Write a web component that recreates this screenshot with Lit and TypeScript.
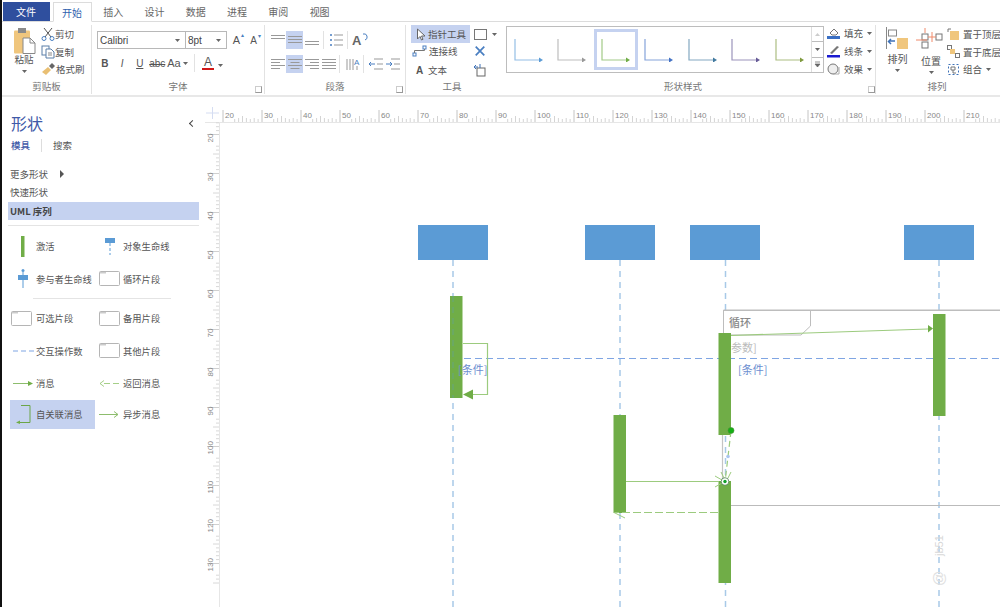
import { LitElement, html, css, svg } from "lit";
import { customElement } from "lit/decorators.js";

const caret = html`<svg class="caret" width="7" height="5" viewBox="0 0 7 5"><path d="M1 1h5L3.5 4z" fill="#666"/></svg>`;

const I = {
  paste: html`<svg width="23" height="26" viewBox="0 0 23 26"><rect x="1" y="2.500" width="16" height="23" rx="1" fill="#f0c67d"/><rect x="5" y="0" width="8" height="5" fill="#8a8a8a"/><path d="M10 10h7l5 5v10.500H10z" fill="#fff" stroke="#888"/><path d="M17 10v5h5" fill="none" stroke="#888"/></svg>`,
  cut: html`<svg width="14" height="14" viewBox="0 0 14 14" fill="none" stroke="#555"><path d="M3 1l7 9M11 1L4 10"/><circle cx="3" cy="11.500" r="2" stroke="#4a7fc1"/><circle cx="11" cy="11.500" r="2" stroke="#4a7fc1"/></svg>`,
  copy: html`<svg width="14" height="14" viewBox="0 0 14 14" fill="#fff" stroke="#5a7fa8"><rect x="1" y="1" width="7" height="9"/><path d="M5 4h5l3 3v6H5z"/><path d="M7 8h4M7 10h4" stroke="#888"/></svg>`,
  brush: html`<svg width="15" height="14" viewBox="0 0 15 14"><path d="M1 10l6-5 3 3-5 5z" fill="#e9bf73"/><path d="M8 4l3-3 3 3-3 3z" fill="#666"/></svg>`,
  cross: html`<svg width="12" height="12" viewBox="0 0 14 14" stroke="#4a7fc1" stroke-width="2"><path d="M2 2l10 10M12 2L2 12"/></svg>`,
};

const lines = (ws: number[], y0: number, gap: number, align: "l" | "c" | "r") => svg`${ws.map((w, i) => {
  const x = align === "l" ? 1 : align === "r" ? 15 - w : (16 - w) / 2;
  return svg`<path d="M${x} ${y0 + i * gap + 0.5}h${w}" stroke="#999"/>`;
})}`;
const para = (c: unknown, on = false) => html`<span class="pbtn ${on ? "on" : ""}"><svg width="16" height="16" viewBox="0 0 16 16" fill="none">${c}</svg></span>`;

const arrowItem = (c: string, sel = false) => html`<div class="gal ${sel ? "sel" : ""}"><svg width="30" height="24" viewBox="0 0 30 24" fill="none"><path d="M1 1v21h25" stroke="${c}" stroke-opacity=".65" stroke-width="1.2"/><path d="M25 19.5l4 2.500-4 2.500z" fill="${c}"/></svg></div>`;

const frameIcon = html`<svg class="fi" width="21" height="15" viewBox="0 0 21 15" fill="#fff"><rect x=".5" y=".5" width="20" height="14" rx="1" stroke="#b5b5b5"/><path d="M1 1h6v1.500H1z" fill="#ccc"/></svg>`;

@customElement("app-root")
export class AppRoot extends LitElement {
  static styles = css`
    :host { display: block; width: 1000px; height: 607px; overflow: hidden; background: #fff; font-family: "Noto Sans CJK SC", "Liberation Sans", sans-serif; font-size: 10px; color: #555; border-left: 2px solid #111; box-sizing: border-box; }
    .tabs { display: flex; height: 22px; align-items: flex-end; border-bottom: 1px solid #dcdcdc; box-sizing: border-box; font-size: 10px; }
    .file { width: 47px; height: 19px; margin-left: .5px; background: #2f4f9e; color: #fff; display: flex; align-items: center; justify-content: center; }
    .tab { width: 41.300px; height: 19px; display: flex; align-items: center; justify-content: center; color: #666; }
    .tab.act { width: 39px; margin: 0 1px 0 3px; height: 20px; margin-bottom: -1px; border: 1px solid #dcdcdc; border-bottom: 1px solid #fff; box-sizing: border-box; background: #fff; color: #2f5fae; }
    .ribbon { display: flex; height: 73px; border-bottom: 2px solid #e8e8e8; box-sizing: content-box; }
    .grp { display: flex; flex-direction: column; border-right: 1px solid #e2e2e2; margin: 3px 0 1px; box-sizing: border-box; position: relative; }
    .grp.last { border-right: 0; }
    .body { height: 54px; display: flex; }
    .lbl { height: 15px; line-height: 15px; text-align: center; color: #777; font-size: 9.500px; }
    .launch { position: absolute; right: 2px; bottom: 1px; width: 5px; height: 5px; border: 1px solid #999; border-top-color: #ccc; border-left-color: #ccc; }
    .clip { width: 90px; } .font { width: 173px; } .par { width: 141px; } .tools { width: 92px; border-right: 0; } .styles { width: 378px; } .arr { width: 122px; }
    .paste { width: 34px; margin-left: 5px; display: flex; flex-direction: column; align-items: center; padding-top: 3px; font-size: 9.500px; line-height: 10px; color: #555; }
    .paste svg.caret { margin-top: 5px; }
    .col { display: flex; flex-direction: column; justify-content: space-between; padding: 1px 0 2px; }
    .it { display: flex; align-items: center; gap: 3px; height: 16px; font-size: 9.500px; white-space: nowrap; color: #555; }
    .clip .it { gap: 0; }
    .font .body { flex-direction: column; padding: 6px 0 0 5px; gap: 5px; }
    .row { display: flex; align-items: center; }
    .sel1, .sel2 { height: 18px; border: 1px solid #b8b8b8; box-sizing: border-box; display: flex; align-items: center; justify-content: space-between; padding: 0 4px 0 2px; font-family: "Liberation Sans", sans-serif; font-size: 10px; color: #444; }
    .sel1 { width: 89px; } .sel2 { width: 42px; margin-left: -1px; }
    .ga { font-family: "Liberation Sans", sans-serif; font-size: 11px; color: #555; width: 17px; text-align: center; position: relative; }
    .ga sup { font-size: 6px; color: #4a7fc1; position: absolute; top: -2px; right: 1px; line-height: 1; }
    .fb { font-family: "Liberation Sans", sans-serif; color: #555; width: 17.500px; text-align: center; font-size: 10px; }
    .vsep { width: 1px; height: 18px; background: #e2e2e2; }
    .fa { display: flex; flex-direction: column; align-items: center; width: 14px; font: 12px/12px "Liberation Sans", sans-serif; color: #555; }
    .fa i { display: block; width: 12px; height: 2.500px; background: #d01818; }
    .par .body { flex-direction: column; padding: 6px 0 0 4px; gap: 6px; }
    .pbtn { width: 17px; height: 18px; display: flex; align-items: center; justify-content: center; flex: none; }
    .pbtn.on { background: #c5d2f0; }
    .tools .body { flex-direction: column; padding-left: 5px; }
    .tr { display: flex; align-items: center; height: 18px; }
    .tl { width: 59px; height: 18px; display: flex; align-items: center; gap: 2px; padding-left: 5px; box-sizing: border-box; color: #555; font-size: 9.500px; white-space: nowrap; }
    .tl.on { background: #c5d2f0; }
    .ti { margin-left: 4px; display: flex; align-items: center; gap: 4px; }
    .gallery { width: 318px; height: 47px; border: 1px solid #bdbdbd; box-sizing: border-box; display: flex; margin: 1px 0 0 8px; position: relative; padding: 2px 0; }
    .gal { width: 43.500px; display: flex; align-items: center; justify-content: center; box-sizing: border-box; flex: none; }
    .gal.sel { border: 3px solid #c5d2f0; }
    .scr { position: absolute; right: 0; top: 0; bottom: 0; width: 11px; border-left: 1px solid #ddd; display: flex; flex-direction: column; }
    .scr span { flex: 1; display: flex; align-items: center; justify-content: center; border-bottom: 1px solid #bdbdbd; }
    .scr span:last-child { border-bottom: 0; }
    .sc { margin-left: 3px; }
    .arr .body { padding-left: 10px; }
    .big { display: flex; flex-direction: column; align-items: center; width: 32px; font-size: 10px; color: #555; gap: 2px; padding-top: 2px; }
    .side { width: 203px; flex: none; display: flex; flex-direction: column; padding: 15px 6px 0 6px; box-sizing: border-box; }
    .main { display: flex; height: 510px; }
    .head { display: flex; justify-content: space-between; align-items: center; padding: 0 2px 0 3px; font-size: 16px; color: #3f5aa8; height: 22px; }
    .chev { width: 4px; height: 4px; border-left: 1.500px solid #444; border-bottom: 1.500px solid #444; transform: rotate(45deg); margin-right: 2px; }
    .sub { display: flex; align-items: center; height: 14px; margin: 4px 0 0 3px; font-size: 9.500px; }
    .sub b { color: #3f5aa8; font-weight: 500; }
    .sub i { width: 1px; height: 13px; background: #ddd; margin: 0 11px; }
    .m { height: 18px; line-height: 18px; font-size: 9.500px; padding-left: 2px; color: #555; display: flex; align-items: center; gap: 12px; }
    .tri { width: 0; height: 0; border-left: 4px solid #555; border-top: 4px solid transparent; border-bottom: 4px solid transparent; }
    .m.hl { background: #c5d2f0; font-weight: 700; color: #444; margin-top: 1px; }
    .m.first { margin-top: 13px; }
    hr { border: 0; border-top: 1px solid #e4e4e4; margin: 5px 0 0; }
    .grid { display: grid; grid-template-columns: 88px 1fr; row-gap: 0; font-size: 9.300px; margin-top: 4px; margin-left: 2px; }
    .s { display: flex; align-items: center; height: 32.500px; white-space: nowrap; color: #555; }
    .s .ic { width: 26px; display: flex; justify-content: center; flex: none; }
    .s.on { background: #c5d2f0; height: 29px; margin-right: 2px; width: 85px; }
    .grid hr { grid-column: 1 / 3; margin: 3px 28px 3px 23px; }
    .s.r .ic { width: 25px; }
    .s.fr .ic { width: 26px; justify-content: flex-start; padding-left: 1px; box-sizing: border-box; }
    .s.r.fr .ic { width: 25px; }
    .canvas { flex: 1; display: block; }
    .canvas svg { display: block; }
    text { font-family: "Noto Sans CJK SC", "Liberation Sans", sans-serif; }
  `;

  private ruler() {
    const h: unknown[] = [];
    for (let v = 20; v <= 219; v++) {
      const x = 223 + (v - 20) * 3.9;
      if (x > 1000) break;
      const u = v % 10;
      if (u === 0) {
        h.push(svg`<path d="M${x} 110v12" stroke="#c4c4c4"/><text x="${x + 2}" y="118" font-size="8" fill="#888" style="font-family:'Liberation Sans',sans-serif">${v}</text>`);
      } else if (u > 2) {
        h.push(svg`<path d="M${x} ${u === 5 ? 116 : u % 2 ? 119 : 118}V122" stroke="#d4d4d4"/>`);
      }
    }
    const w: unknown[] = [];
    for (let v = 15; v <= 135; v++) {
      const y = 137.500 + (v - 20) * 3.9;
      if (y < 122) continue;
      const u = v % 10;
      if (u === 0) {
        w.push(svg`<path d="M207 ${y - 3}H219" stroke="#d0d0d0"/><text transform="translate(213,${y + 5}) rotate(-90)" font-size="8" fill="#888" style="font-family:'Liberation Sans',sans-serif">${v}</text>`);
      } else if (u > 2) {
        w.push(svg`<path d="M${u === 5 ? 213 : 216} ${y - 3}H219" stroke="#d8d8d8"/>`);
      }
    }
    return svg`
      <path d="M206 113h13M212.500 107v12" stroke="#d5ddf2"/>
      <path d="M205 122.500H1000M219.500 122V607" stroke="#e6e6e6"/>
      ${h}${w}`;
  }

  private diagram() {
    const boxes = [418, 585, 690, 904];
    const lifes = [453, 620, 725.500, 939];
    const acts: [number, number, number][] = [[450, 296, 398], [613.500, 415, 513], [718.500, 333, 435], [718.500, 481, 583], [933, 314, 416]];
    const green = "#9ccb7e";
    return svg`
      ${boxes.map((x) => svg`<rect x="${x}" y="225" width="70" height="35" fill="#5b9bd5"/>`)}
      ${lifes.map((x) => svg`<path d="M${x} 260V607" stroke="#a8c9e8" stroke-width="1.500" stroke-dasharray="6 5"/>`)}
      <path d="M1001 310H723.500V335H801L810.500 326V310" fill="#fff" stroke="#bdbdbd"/>
      <path d="M1001 310.500H723.500" stroke="#bdbdbd"/>
      <text x="729" y="327" font-size="11" fill="#888" font-weight="500">循环</text>
      <text x="731" y="352" font-size="11" fill="#bbb">参数]</text>
      <path d="M453 358.500H1000" stroke="#7fa5e3" stroke-width="1.200" stroke-dasharray="7 4"/>
      ${acts.map(([x, a, b]) => svg`<rect x="${x}" y="${a}" width="12.500" height="${b - a}" fill="#70ad47"/>`)}
      <path d="M453 296V398" stroke="#5f9fb0" stroke-width="1" stroke-dasharray="6 5" opacity=".55"/>
      <path d="M463 343.500H487.500V394.500H473" fill="none" stroke="${green}" stroke-width="1.200"/>
      <path d="M463 394.500L473 389.500V399.500z" fill="#70ad47"/>
      <text x="458" y="374" font-size="11" fill="#6d8fd0">[条件]</text>
      <text x="738" y="374" font-size="11" fill="#6d8fd0">[条件]</text>
      <path d="M731 335.500L928 329" stroke="${green}" stroke-width="1.200"/>
      <path d="M933 328.500L928 325V332.500z" fill="#70ad47"/>
      <path d="M731 505.500H1000" stroke="#bbb" stroke-width="1.200"/>
      <path d="M626 481.500H719" stroke="${green}" stroke-width="1.200"/>
      <path d="M718 512.500H615" stroke="${green}" stroke-width="1.200" stroke-dasharray="8 3"/>
      <path d="M614 512.500L625 518" stroke="${green}"/>
      <path d="M722.500 435V480" stroke="#c4c4c4" stroke-width="1.200"/>
      <path d="M731 431L725.500 478" stroke="${green}" stroke-width="1.200" stroke-dasharray="6 4"/>
      <path d="M715 476L722 480M715 487L722 483M721 472L724 478M731 472L728 478" stroke="${green}"/>
      <circle cx="731" cy="430.500" r="3" fill="#14b014" stroke="#4b8f3a" stroke-width=".6"/>
      <circle cx="728" cy="456.500" r="1.800" fill="#a9c4ee"/>
      <circle cx="725" cy="481.500" r="3.800" fill="#fff" stroke="#4b7f50" stroke-width=".8"/>
      <circle cx="725" cy="481.500" r="1.700" fill="#14a02c"/>
      <text transform="translate(943,556) rotate(-90)" font-size="11" fill="#d8d8d8" style="font-family:'Liberation Sans',sans-serif">jb51</text>
      <text transform="translate(944,586) rotate(-90)" font-size="15" fill="#e0e0e0" style="font-family:'Liberation Sans',sans-serif">@</text>
    `;
  }

  render() {
    const blue = "#5b9bd5", g = "#70ad47";
    return html`
      <div class="tabs">
        <div class="file">文件</div><div class="tab act">开始</div>
        ${["插入", "设计", "数据", "进程", "审阅", "视图"].map((t) => html`<div class="tab">${t}</div>`)}
      </div>
      <div class="ribbon">
        <div class="grp clip">
          <div class="body">
            <div class="paste">${I.paste}<span>粘贴</span>${caret}</div>
            <div class="col">
              <div class="it">${I.cut}剪切</div><div class="it">${I.copy}复制</div><div class="it">${I.brush}格式刷</div>
            </div>
          </div>
          <div class="lbl">剪贴板</div>
        </div>
        <div class="grp font">
          <div class="body">
            <div class="row">
              <div class="sel1">Calibri ${caret}</div><div class="sel2">8pt ${caret}</div>
              <span class="ga" style="margin-left:1px">A<sup>▴</sup></span><span class="ga" style="font-size:10px">A<sup>▾</sup></span>
            </div>
            <div class="row" style="margin-left:-1px">
              <span class="fb"><b>B</b></span><span class="fb"><i>I</i></span><span class="fb"><u>U</u></span><span class="fb"><s>abc</s></span>
              <span class="fb" style="font-size:11px;width:16px">Aa</span>${caret}
              <span class="vsep" style="margin:0 6px 0 5px"></span>
              <span class="fa">A<i></i></span><span style="margin-left:2px">${caret}</span>
            </div>
          </div>
          <div class="lbl">字体</div><span class="launch"></span>
        </div>
        <div class="grp par">
          <div class="body">
            <div class="row">
              ${para(lines([14, 14], 3, 3, "c"))}${para(lines([14, 14, 14], 4, 3, "c"), true)}${para(lines([14, 14], 9, 3, "c"))}
              <span class="vsep" style="margin:0 3px"></span>
              ${para(svg`<path d="M2 3h2M2 8h2M2 13h2" stroke="#4a7fc1" stroke-width="1.500"/><path d="M6 3h9M6 8h9M6 13h9" stroke="#999"/>`)}
              <span class="vsep" style="margin:0 3px"></span>
              ${para(svg`<text x="0" y="13" font-size="13" font-weight="700" fill="#666" style="font-family:'Liberation Sans',sans-serif">A</text><path d="M11 2a3 3 0 0 1 2 6" stroke="#4a7fc1"/>`)}
            </div>
            <div class="row">
              ${para(lines([14, 9, 14, 9], 3, 3, "l"))}${para(lines([14, 9, 14, 9], 3, 3, "c"), true)}${para(lines([14, 9, 14, 9], 3, 3, "r"))}${para(lines([14, 14, 14, 14], 3, 3, "c"))}
              <span class="vsep" style="margin:0 4px 0 2px"></span>
              ${para(svg`<path d="M2 3v11M5 3v11M8 3v11" stroke="#999"/><text x="9" y="9" font-size="8" fill="#4a7fc1" style="font-family:'Liberation Sans',sans-serif">A</text><path d="M12 10v4" stroke="#999"/>`)}
              <span class="vsep" style="margin:0 3px 0 2px"></span>
              ${para(svg`<path d="M6 3h9M9 8h6M6 13h9" stroke="#999"/><path d="M7 8H1M3 6L1 8l2 2" stroke="#4a7fc1"/>`)}
              ${para(svg`<path d="M6 3h9M9 8h6M6 13h9" stroke="#999"/><path d="M1 8h6M5 6l2 2-2 2" stroke="#4a7fc1"/>`)}
            </div>
          </div>
          <div class="lbl">段落</div><span class="launch"></span>
        </div>
        <div class="grp tools">
          <div class="body">
            <div class="tr">
              <div class="tl on"><svg width="10" height="13" viewBox="0 0 10 13"><path d="M1.500 1v10l2.500-2.500 1.500 3.500 1.500-.7L5.500 8H9z" fill="#fff" stroke="#666"/></svg>指针工具</div>
              <div class="ti"><svg width="13" height="11" viewBox="0 0 13 11"><rect x=".5" y=".5" width="12" height="10" fill="#fff" stroke="#777"/></svg>${caret}</div>
            </div>
            <div class="tr" style="margin-top:-1px">
              <div class="tl" style="padding-left:1px"><svg width="15" height="12" viewBox="0 0 15 12" fill="#fff" stroke="#4a7fc1"><rect x="1" y="8" width="3" height="3"/><rect x="11" y="1" width="3" height="3"/><path d="M2.500 8V5.500h10V4" fill="none" stroke="#777"/></svg>连接线</div>
              <div class="ti" style="margin-left:4px">${I.cross}</div>
            </div>
            <div class="tr" style="margin-top:1px">
              <div class="tl"><span style="font:700 10px 'Liberation Sans',sans-serif;color:#555;width:10px">A</span>文本</div>
              <div class="ti" style="margin-left:3px"><svg width="14" height="14" viewBox="0 0 14 14" fill="none"><rect x="4" y="5" width="8" height="8" stroke="#666"/><path d="M1 4h4M3 2L1 4l2 2M7 5V1" stroke="#3f72b8"/></svg></div>
            </div>
          </div>
          <div class="lbl">工具</div>
        </div>
        <div class="grp styles">
          <div class="body">
            <div class="gallery">
              ${arrowItem("#5b9bd5")}${arrowItem("#999999")}${arrowItem(g, true)}${arrowItem("#4472c4")}${arrowItem("#41799f")}${arrowItem("#665a96")}${arrowItem("#7f9a3f")}
              <div class="scr">
                <span><svg width="7" height="5" viewBox="0 0 7 5"><path d="M1 4h5L3.500 1z" fill="#ccc"/></svg></span>
                <span>${caret}</span>
                <span><svg width="7" height="7" viewBox="0 0 7 7"><path d="M1 1h5M1 3h5L3.500 6z" stroke="#666" stroke-width=".7" fill="#666"/></svg></span>
              </div>
            </div>
            <div class="col sc">
              <div class="it" style="margin-top:-1px"><svg width="14" height="14" viewBox="0 0 14 14"><path d="M3 7l4-4 4 4-2 2H5z" fill="#fff" stroke="#777"/><rect x="0" y="10" width="13" height="3" fill="#3a6fc4"/></svg>填充 ${caret}</div>
              <div class="it"><svg width="14" height="14" viewBox="0 0 14 14"><path d="M3 9l7-7 2 1-7 7z" fill="#777"/><rect x="0" y="11" width="13" height="2.500" fill="#1a1ad0"/></svg>线条 ${caret}</div>
              <div class="it"><svg width="14" height="14" viewBox="0 0 14 14"><circle cx="6" cy="7" r="5" fill="#eee" stroke="#777"/><path d="M6 12h6V5" stroke="#aaa" fill="none"/></svg>效果 ${caret}</div>
            </div>
          </div>
          <div class="lbl" style="width:370px">形状样式</div><span class="launch" style="right:0"></span>
        </div>
        <div class="grp arr last">
          <div class="body">
            <div class="big" style="width:24px">
              <svg width="23" height="22" viewBox="0 0 23 22"><path d="M.5 0v22" stroke="#888"/><rect x="2.500" y="3" width="8" height="6" fill="#fff" stroke="#888"/><rect x="11" y="11" width="11" height="11" fill="#f0c67d"/><path d="M9 14H3M5 12l-2.500 2.500L5 17" stroke="#3f72b8" stroke-width="1.500" fill="none"/></svg>
              <span>排列</span>${caret}
            </div>
            <div class="big" style="margin-left:7px">
              <svg width="30" height="24" viewBox="0 0 30 24" fill="#fff" stroke="#777"><rect x="6" y="7" width="6" height="6"/><rect x="20" y="7" width="6" height="6"/><rect x="6" y="15" width="6" height="6"/><path d="M12 10h8M0 13h11M9 1v5M16 5v10" stroke="#f08a6a" fill="none"/></svg>
              <span>位置</span>${caret}
            </div>
            <div class="col" style="margin-left:1px;flex:none">
              <div class="it"><svg width="13" height="13" viewBox="0 0 13 13"><path d="M1 4V1h3" fill="none" stroke="#777"/><rect x="3" y="3" width="9" height="9" fill="#f0c67d"/></svg>置于顶层</div>
              <div class="it"><svg width="13" height="13" viewBox="0 0 13 13"><rect x=".5" y=".5" width="4" height="4" fill="#fff" stroke="#777"/><rect x="3" y="4" width="5" height="5" fill="#f0c67d"/><rect x="8.500" y="8.500" width="4" height="4" fill="#fff" stroke="#777"/></svg>置于底层</div>
              <div class="it"><svg width="13" height="13" viewBox="0 0 13 13" fill="none"><rect x="1.500" y="1.500" width="10" height="10" stroke="#3f72b8" stroke-dasharray="2 2"/><path d="M4 4h4v3H4zM6 7v3h3" stroke="#777"/></svg>组合 ${caret}</div>
            </div>
          </div>
          <div class="lbl">排列</div>
        </div>
      </div>
      <div class="main">
        <div class="side">
          <div class="head"><span>形状</span><span class="chev"></span></div>
          <div class="sub"><b>模具</b><i></i><span>搜索</span></div>
          <div class="m first">更多形状<span class="tri"></span></div>
          <div class="m">快速形状</div>
          <div class="m hl">UML 序列</div>
          <hr />
          <div class="grid">
            <div class="s"><span class="ic"><svg width="4" height="21"><rect width="3.500" height="21" fill="${g}"/></svg></span>激活</div>
            <div class="s r"><span class="ic"><svg width="11" height="17" viewBox="0 0 11 17"><rect width="10" height="5" fill="${blue}"/><path d="M5 5v12" stroke="${blue}" stroke-dasharray="3 2"/></svg></span>对象生命线</div>
            <div class="s"><span class="ic"><svg width="11" height="19" viewBox="0 0 11 19"><circle cx="5" cy="1.500" r="1.500" fill="${blue}"/><rect y="6" width="10" height="5" fill="${blue}"/><path d="M5 3v16" stroke="${blue}"/></svg></span>参与者生命线</div>
            <div class="s r fr"><span class="ic">${frameIcon}</span>循环片段</div>
            <hr />
            <div class="s fr"><span class="ic">${frameIcon}</span>可选片段</div>
            <div class="s r fr"><span class="ic">${frameIcon}</span>备用片段</div>
            <div class="s"><span class="ic"><svg width="21" height="2"><path d="M0 1h21" stroke="#7fa5e3" stroke-dasharray="5 3"/></svg></span>交互操作数</div>
            <div class="s r fr"><span class="ic">${frameIcon}</span>其他片段</div>
            <div class="s"><span class="ic"><svg width="20" height="7" viewBox="0 0 20 7"><path d="M0 3.500h17" stroke="#8dbd6d"/><path d="M15 1l5 2.500L15 6z" fill="${g}"/></svg></span>消息</div>
            <div class="s r fr"><span class="ic"><svg width="20" height="7" viewBox="0 0 20 7" fill="none" stroke="#a5cf88"><path d="M20 3.500H1" stroke-dasharray="6 3"/><path d="M5 .5L1 3.500l4 3"/></svg></span>返回消息</div>
            <div class="s on"><span class="ic"><svg width="16" height="19" viewBox="0 0 16 19" fill="none"><path d="M6 .5h9v17H2" stroke="#6ba548"/><path d="M5 15.500l-4 2 4 1.500z" fill="${g}"/></svg></span>自关联消息</div>
            <div class="s r fr" style="height:29px"><span class="ic"><svg width="20" height="7" viewBox="0 0 20 7" fill="none" stroke="#8dbd6d"><path d="M0 3.500h19M15 .5l4 3-4 3"/></svg></span>异步消息</div>
          </div>
        </div>
        <div class="canvas">
          <svg width="795" height="510" viewBox="205 97 795 510">${this.ruler()}${this.diagram()}</svg>
        </div>
      </div>
    `;
  }
}
